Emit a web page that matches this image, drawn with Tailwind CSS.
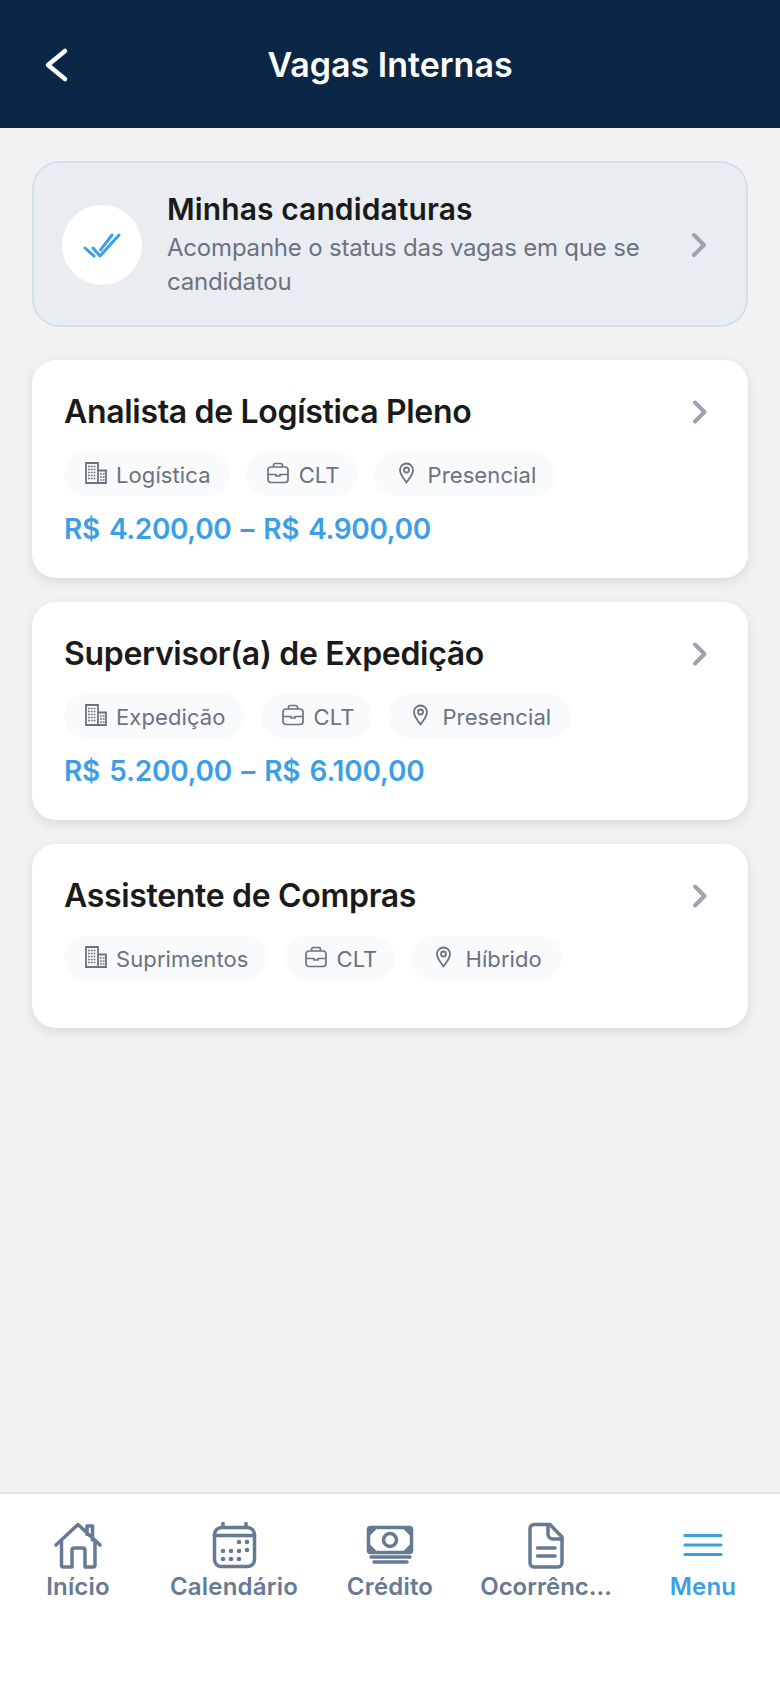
<!DOCTYPE html>
<html lang="pt-BR">
<head>
<meta charset="utf-8">
<script src="https://cdn.jsdelivr.net/npm/@tailwindcss/browser@4"></script>
<title>Vagas Internas</title>
</head>
<body class="m-0 bg-[#f2f2f2] font-['Inter',sans-serif]">
<div class="flex h-[1688px] w-[780px] flex-col overflow-hidden">
  <header class="relative flex h-[128px] items-center justify-center bg-[#0b2747] pt-[2px]">
    <svg class="absolute left-[36px] top-[45px]" width="40" height="40" viewBox="0 0 40 40" fill="none" stroke="#ffffff" stroke-width="4.500" stroke-linecap="round" stroke-linejoin="round"><path d="M29 6 L12 20 L29 34"/></svg>
    <h1 class="text-[34px] leading-[40px] font-semibold text-white">Vagas Internas</h1>
  </header>

  <main class="flex flex-1 flex-col gap-[24px] px-[32px] pt-[33px]">
    <section class="mb-[9px] flex items-center rounded-[28px] border-2 border-[#cfe1ee] bg-[#e9edf2] pt-[28px] pb-[26px] pl-[28px] pr-[36px]">
      <div class="-mt-[1px] flex h-[80px] w-[80px] shrink-0 items-center justify-center rounded-full bg-white">
        <svg width="40" height="40" viewBox="0 0 40 40" fill="none" stroke="#3b9fe6" stroke-width="3" stroke-linecap="round" stroke-linejoin="round"><path d="M3 23 L12 31"/><path d="M11 23 L18 31 L37 10"/><path d="M18.500 25 L30 10"/></svg>
      </div>
      <div class="ml-[25px] min-w-0 flex-1 pr-[30px]">
        <h2 class="text-[30px] leading-[36px] font-semibold tracking-[0.1px] text-[#1a1a1a]">Minhas candidaturas</h2>
        <p class="mt-[4px] text-[24px] leading-[34px] tracking-[-0.2px] text-[#6b7280]">Acompanhe o status das vagas em que se candidatou</p>
      </div>
      <svg class="shrink-0" width="24" height="32" viewBox="0 0 24 32" fill="none" stroke="#9ca3af" stroke-width="4" stroke-linecap="round" stroke-linejoin="round"><path d="M8 6 L18 16 L8 26"/></svg>
    </section>

    <article class="rounded-[24px] bg-white p-[32px] shadow-[0_4px_12px_rgba(0,0,0,0.10)]">
      <div class="flex items-center justify-between">
        <h3 class="text-[32px] leading-[40px] font-semibold tracking-[-0.32px] text-[#1a1a1a]">Analista de Logística Pleno</h3>
        <svg class="mr-[5px] shrink-0" width="24" height="32" viewBox="0 0 24 32" fill="none" stroke="#9ca3af" stroke-width="4" stroke-linecap="round" stroke-linejoin="round"><path d="M8 6.500 L17.500 16 L8 25.500"/></svg>
      </div>
      <div class="mt-[20px] flex gap-[16px]">
        <span class="flex h-[44px] items-center gap-[9px] rounded-full bg-[#f8fafc] pt-[2px] pr-[19px] pl-[21px] text-[22px] tracking-[0.1px] text-[#6b7280]">
          <svg class="-mt-[4px]" width="22" height="22" viewBox="0 0 22 22" fill="none" stroke="#6b7280" stroke-width="1.800"><path d="M1 21 V1 H13 V21 Z"/><path d="M13 8.500 H21 V21 H13"/><path stroke-width="1.600" stroke-dasharray="1.800 1" d="M3 4.500 H11 M3 7.500 H11 M3 10.500 H11 M3 13.500 H11 M3 16.500 H11 M15 12 H20 M15 15 H20 M15 18 H20"/></svg>
          Logística
        </span>
        <span class="flex h-[44px] items-center gap-[10px] rounded-full bg-[#f8fafc] pt-[2px] pr-[18px] pl-[21px] text-[22px] tracking-[0.1px] text-[#6b7280]">
          <svg class="-mt-[4px]" width="22" height="22" viewBox="0 0 22 22" fill="none" stroke="#6b7280" stroke-width="1.700" stroke-linejoin="round"><rect x="1" y="5" width="20" height="15.500" rx="3"/><path d="M6.500 5 V3.500 A2 2 0 0 1 8.500 1.500 H13.500 A2 2 0 0 1 15.500 3.500 V5"/><path d="M1 12.500 H9 V14 H13 V12.500 H21"/></svg>
          CLT
        </span>
        <span class="flex h-[44px] items-center gap-[12px] rounded-full bg-[#f8fafc] pt-[2px] pr-[20px] pl-[20px] text-[22px] tracking-[0.1px] text-[#6b7280]">
          <svg class="-mt-[4px]" width="22" height="22" viewBox="0 0 22 22" fill="none" stroke="#6b7280" stroke-width="1.800" stroke-linejoin="round"><path d="M12.500 20.500 C9 15.500 6 12.500 6 8 A6.500 6.500 0 0 1 19 8 C19 12.500 16 15.500 12.500 20.500 Z"/><circle cx="12.500" cy="8" r="2.500"/></svg>
          Presencial
        </span>
      </div>
      <p class="mt-[16px] text-[28px] leading-[34px] font-semibold tracking-[-0.35px] [word-spacing:2.400px] text-[#3b9fe6]">R$ 4.200,00 – R$ 4.900,00</p>
    </article>

    <article class="rounded-[24px] bg-white p-[32px] shadow-[0_4px_12px_rgba(0,0,0,0.10)]">
      <div class="flex items-center justify-between">
        <h3 class="text-[32px] leading-[40px] font-semibold tracking-[-0.32px] text-[#1a1a1a]">Supervisor(a) de Expedição</h3>
        <svg class="mr-[5px] shrink-0" width="24" height="32" viewBox="0 0 24 32" fill="none" stroke="#9ca3af" stroke-width="4" stroke-linecap="round" stroke-linejoin="round"><path d="M8 6.500 L17.500 16 L8 25.500"/></svg>
      </div>
      <div class="mt-[20px] flex gap-[16px]">
        <span class="flex h-[44px] items-center gap-[9px] rounded-full bg-[#f8fafc] pt-[2px] pr-[19px] pl-[21px] text-[22px] tracking-[0.1px] text-[#6b7280]">
          <svg class="-mt-[4px]" width="22" height="22" viewBox="0 0 22 22" fill="none" stroke="#6b7280" stroke-width="1.800"><path d="M1 21 V1 H13 V21 Z"/><path d="M13 8.500 H21 V21 H13"/><path stroke-width="1.600" stroke-dasharray="1.800 1" d="M3 4.500 H11 M3 7.500 H11 M3 10.500 H11 M3 13.500 H11 M3 16.500 H11 M15 12 H20 M15 15 H20 M15 18 H20"/></svg>
          Expedição
        </span>
        <span class="flex h-[44px] items-center gap-[10px] rounded-full bg-[#f8fafc] pt-[2px] pr-[18px] pl-[21px] text-[22px] tracking-[0.1px] text-[#6b7280]">
          <svg class="-mt-[4px]" width="22" height="22" viewBox="0 0 22 22" fill="none" stroke="#6b7280" stroke-width="1.700" stroke-linejoin="round"><rect x="1" y="5" width="20" height="15.500" rx="3"/><path d="M6.500 5 V3.500 A2 2 0 0 1 8.500 1.500 H13.500 A2 2 0 0 1 15.500 3.500 V5"/><path d="M1 12.500 H9 V14 H13 V12.500 H21"/></svg>
          CLT
        </span>
        <span class="flex h-[44px] items-center gap-[12px] rounded-full bg-[#f8fafc] pt-[2px] pr-[20px] pl-[20px] text-[22px] tracking-[0.1px] text-[#6b7280]">
          <svg class="-mt-[4px]" width="22" height="22" viewBox="0 0 22 22" fill="none" stroke="#6b7280" stroke-width="1.800" stroke-linejoin="round"><path d="M12.500 20.500 C9 15.500 6 12.500 6 8 A6.500 6.500 0 0 1 19 8 C19 12.500 16 15.500 12.500 20.500 Z"/><circle cx="12.500" cy="8" r="2.500"/></svg>
          Presencial
        </span>
      </div>
      <p class="mt-[16px] text-[28px] leading-[34px] font-semibold tracking-[-0.22px] [word-spacing:2.400px] text-[#3b9fe6]">R$ 5.200,00 – R$ 6.100,00</p>
    </article>

    <article class="rounded-[24px] bg-white px-[32px] pt-[32px] pb-[48px] shadow-[0_4px_12px_rgba(0,0,0,0.10)]">
      <div class="flex items-center justify-between">
        <h3 class="text-[32px] leading-[40px] font-semibold tracking-[-0.32px] text-[#1a1a1a]">Assistente de Compras</h3>
        <svg class="mr-[5px] shrink-0" width="24" height="32" viewBox="0 0 24 32" fill="none" stroke="#9ca3af" stroke-width="4" stroke-linecap="round" stroke-linejoin="round"><path d="M8 6.500 L17.500 16 L8 25.500"/></svg>
      </div>
      <div class="mt-[20px] flex gap-[16px]">
        <span class="flex h-[44px] items-center gap-[9px] rounded-full bg-[#f8fafc] pt-[2px] pr-[19px] pl-[21px] text-[22px] tracking-[0.1px] text-[#6b7280]">
          <svg class="-mt-[4px]" width="22" height="22" viewBox="0 0 22 22" fill="none" stroke="#6b7280" stroke-width="1.800"><path d="M1 21 V1 H13 V21 Z"/><path d="M13 8.500 H21 V21 H13"/><path stroke-width="1.600" stroke-dasharray="1.800 1" d="M3 4.500 H11 M3 7.500 H11 M3 10.500 H11 M3 13.500 H11 M3 16.500 H11 M15 12 H20 M15 15 H20 M15 18 H20"/></svg>
          Suprimentos
        </span>
        <span class="flex h-[44px] items-center gap-[10px] rounded-full bg-[#f8fafc] pt-[2px] pr-[18px] pl-[21px] text-[22px] tracking-[0.1px] text-[#6b7280]">
          <svg class="-mt-[4px]" width="22" height="22" viewBox="0 0 22 22" fill="none" stroke="#6b7280" stroke-width="1.700" stroke-linejoin="round"><rect x="1" y="5" width="20" height="15.500" rx="3"/><path d="M6.500 5 V3.500 A2 2 0 0 1 8.500 1.500 H13.500 A2 2 0 0 1 15.500 3.500 V5"/><path d="M1 12.500 H9 V14 H13 V12.500 H21"/></svg>
          CLT
        </span>
        <span class="flex h-[44px] items-center gap-[12px] rounded-full bg-[#f8fafc] pt-[2px] pr-[20px] pl-[20px] text-[22px] tracking-[0.1px] text-[#6b7280]">
          <svg class="-mt-[4px]" width="22" height="22" viewBox="0 0 22 22" fill="none" stroke="#6b7280" stroke-width="1.800" stroke-linejoin="round"><path d="M12.500 20.500 C9 15.500 6 12.500 6 8 A6.500 6.500 0 0 1 19 8 C19 12.500 16 15.500 12.500 20.500 Z"/><circle cx="12.500" cy="8" r="2.500"/></svg>
          Híbrido
        </span>
      </div>
    </article>
  </main>

  <nav class="grid h-[196px] grid-cols-5 border-t-2 border-[#e4e4ee] bg-white pt-[28px]">
    <a class="flex min-w-0 flex-col items-center">
      <svg width="48" height="48" viewBox="0 0 48 48" fill="none" stroke="#667a94" stroke-width="3.500" stroke-linecap="round" stroke-linejoin="round"><path d="M2 23 L24 2.500 L46 23"/><path d="M33 12.500 V4 H38.500 V18"/><path d="M7.500 19 V43 A2 2 0 0 0 9.500 45 H18 V28 A2 2 0 0 1 20 26 H29 A2 2 0 0 1 31 28 V45 H39 A2 2 0 0 0 41 43 V19"/></svg>
      <span class="text-[24px] leading-[34px] font-semibold tracking-[0.2px] text-[#667a94]">Início</span>
    </a>
    <a class="flex min-w-0 flex-col items-center">
      <svg width="48" height="48" viewBox="0 0 48 48" fill="none" stroke="#667a94" stroke-width="3.500" stroke-linecap="round" stroke-linejoin="round"><rect x="4.500" y="5.500" width="40" height="39" rx="7"/><path d="M4.500 13.500 H44.500"/><path d="M13 1.500 V5 M36 1.500 V5"/><g fill="#667a94" stroke="none"><circle cx="29" cy="20" r="2.300"/><circle cx="37" cy="20" r="2.300"/><circle cx="13" cy="29" r="2.300"/><circle cx="21" cy="29" r="2.300"/><circle cx="29" cy="29" r="2.300"/><circle cx="37" cy="28" r="2.300"/><circle cx="13" cy="37" r="2.300"/><circle cx="21" cy="37" r="2.300"/><circle cx="29" cy="37" r="2.300"/></g></svg>
      <span class="text-[24px] leading-[34px] font-semibold tracking-[0.2px] text-[#667a94]">Calendário</span>
    </a>
    <a class="flex min-w-0 flex-col items-center">
      <svg width="48" height="48" viewBox="0 0 48 48" fill="none" stroke="#667a94" stroke-width="3.500" stroke-linecap="round" stroke-linejoin="round"><rect x="2.500" y="5.500" width="43" height="25" rx="2"/><circle cx="24" cy="18" r="6.500"/><path d="M3 7 L10 7 L3 14 Z M45 7 L38 7 L45 14 Z M3 29 L10 29 L3 22 Z M45 29 L38 29 L45 22 Z" fill="#667a94" stroke-width="1"/><path d="M5 35 H44 M8 40 H41"/></svg>
      <span class="text-[24px] leading-[34px] font-semibold tracking-[0.2px] text-[#667a94]">Crédito</span>
    </a>
    <a class="flex min-w-0 flex-col items-center">
      <svg class="shrink-0" width="48" height="48" viewBox="0 0 48 48" fill="none" stroke="#667a94" stroke-width="3.500" stroke-linecap="round" stroke-linejoin="round"><path d="M28 2.500 H12 A4 4 0 0 0 8 6.500 V41 A4 4 0 0 0 12 45 H36 A4 4 0 0 0 40 41 V15 Z"/><path d="M26 3 V12 A5 5 0 0 0 31 17 H40"/><path d="M15.500 26 H33 M15.500 34 H33"/></svg>
      <span class="whitespace-nowrap text-[24px] leading-[34px] font-semibold text-[#667a94]">Ocorrênc...</span>
    </a>
    <a class="flex min-w-0 flex-col items-center pl-[2px]">
      <svg width="48" height="48" viewBox="0 0 48 48" fill="none" stroke="#3b9fe6" stroke-width="3.200" stroke-linecap="round"><path d="M6 13.500 H42 M6 23 H42 M6 32.500 H42"/></svg>
      <span class="text-[24px] leading-[34px] font-semibold tracking-[0.2px] text-[#3b9fe6]">Menu</span>
    </a>
  </nav>
</div>
</body>
</html>
